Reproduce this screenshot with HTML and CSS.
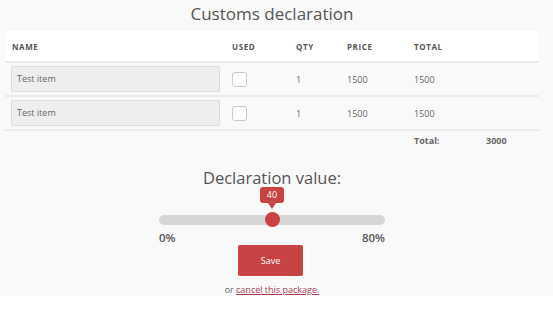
FILE: index.html
```html
<!DOCTYPE html>
<html>
<head>
<meta charset="utf-8">
<link rel="stylesheet" href="styles.css">
</head>
<body>
<div class="page">
  <div class="content">
    <h1 class="title">Customs declaration</h1>
    <table class="items">
      <colgroup>
        <col class="c-name"><col class="c-used"><col class="c-qty"><col class="c-price"><col class="c-total"><col class="c-extra">
      </colgroup>
      <thead>
        <tr><th>Name</th><th>Used</th><th>Qty</th><th>Price</th><th>Total</th><th></th></tr>
      </thead>
      <tbody>
        <tr>
          <td><div class="input">Test item</div></td>
          <td><span class="check"></span></td>
          <td>1</td><td>1500</td><td>1500</td><td></td>
        </tr>
        <tr>
          <td><div class="input">Test item</div></td>
          <td><span class="check"></span></td>
          <td>1</td><td>1500</td><td>1500</td><td></td>
        </tr>
        <tr class="sum">
          <td></td><td></td><td></td><td></td><td>Total:</td><td>3000</td>
        </tr>
      </tbody>
    </table>

    <div class="declare">
      <h2 class="dtitle">Declaration value:</h2>
      <div class="slider">
        <div class="track"></div>
        <div class="thumb"></div>
        <div class="tip">40</div>
      </div>
      <div class="range"><span>0%</span><span>80%</span></div>
      <button class="save">Save</button>
      <p class="cancel">or <a href="#">cancel this package.</a></p>
    </div>
  </div>
</div>
</body>
</html>
```
FILE: styles.css
```css
* { box-sizing: border-box; }
html, body { margin: 0; padding: 0; background: #fff; }
body { font-family: "Open Sans", "Liberation Sans", sans-serif; color: #555; }

.page {
  background: #f9f9f9;
  height: 296px;
  width: 553px;
  padding-top: 2px;
}
.content {
  width: 534px;
  margin-left: 5px;
}
.title {
  margin: 0;
  font-size: 17px;
  font-weight: 400;
  line-height: 24px;
  text-align: center;
  color: #555;
  height: 29px;
}
.items {
  width: 534px;
  border-collapse: collapse;
  table-layout: fixed;
  font-size: 9px;
  color: #666;
}
.c-name { width: 220px; }
.c-used { width: 64px; }
.c-qty { width: 51px; }
.c-price { width: 67px; }
.c-total { width: 72px; }
.c-extra { width: 60px; }

.items thead tr { background: #fff; }
.items th {
  text-align: left;
  font-size: 8px;
  font-weight: 700;
  letter-spacing: 0.6px;
  text-transform: uppercase;
  color: #555;
  height: 31px;
  padding: 0 7px;
  border-bottom: 2px solid #ececec;
}
.items td {
  padding: 0 7px;
  height: 34px;
  border-bottom: 2px solid #ececec;
  vertical-align: middle;
}
.items td:first-child { padding-left: 6px; }
.input {
  width: 209px;
  height: 26px;
  background: #eee;
  border: 1px solid #ddd;
  border-radius: 1px;
  padding-left: 5px;
  line-height: 24px;
  font-size: 9px;
  color: #666;
}
.check {
  display: block;
  width: 15px;
  height: 15px;
  border: 1px solid #c8c8c8;
  border-radius: 3px;
  background: #fff;
}
.items tr.sum td {
  border-bottom: none;
  height: 20px;
  font-weight: 700;
  color: #666;
}

.declare {
  display: flex;
  flex-direction: column;
  align-items: center;
  padding-top: 17px;
}
.dtitle {
  margin: 0;
  font-size: 16.5px;
  font-weight: 400;
  line-height: 22px;
  color: #555;
}
.slider {
  position: relative;
  width: 226px;
  height: 36px;
  margin-top: 3px;
}
.track {
  position: absolute;
  left: 0; right: 0;
  top: 23px;
  height: 10px;
  border-radius: 5px;
  background: #d6d6d6;
}
.thumb {
  position: absolute;
  left: 106px;
  top: 20px;
  width: 15px;
  height: 15px;
  border-radius: 50%;
  background: #c84343;
}
.tip {
  position: absolute;
  left: 101px;
  top: -5px;
  width: 24px;
  height: 16px;
  border-radius: 3px;
  background: #c84343;
  color: #fff;
  font-size: 9px;
  line-height: 16px;
  text-align: center;
}
.tip::after {
  content: "";
  position: absolute;
  left: 8px;
  top: 16px;
  border-left: 4px solid transparent;
  border-right: 4px solid transparent;
  border-top: 6px solid #c84343;
}
.range {
  width: 226px;
  display: flex;
  justify-content: space-between;
  font-size: 11.5px;
  font-weight: 600;
  color: #555;
  line-height: 14px;
  margin-top: 3px;
}
.save {
  margin-top: 0;
  width: 65px;
  height: 31px;
  border: none;
  border-radius: 2px;
  background: #c84343;
  color: #fff;
  font-family: "Open Sans", "Liberation Sans", sans-serif;
  font-size: 9px;
  margin-left: -3px;
}
.cancel {
  margin: 8px 0 0;
  font-size: 9px;
  color: #666;
  line-height: 12px;
}
.cancel a {
  color: #b04050;
  text-decoration: underline;
}
```
